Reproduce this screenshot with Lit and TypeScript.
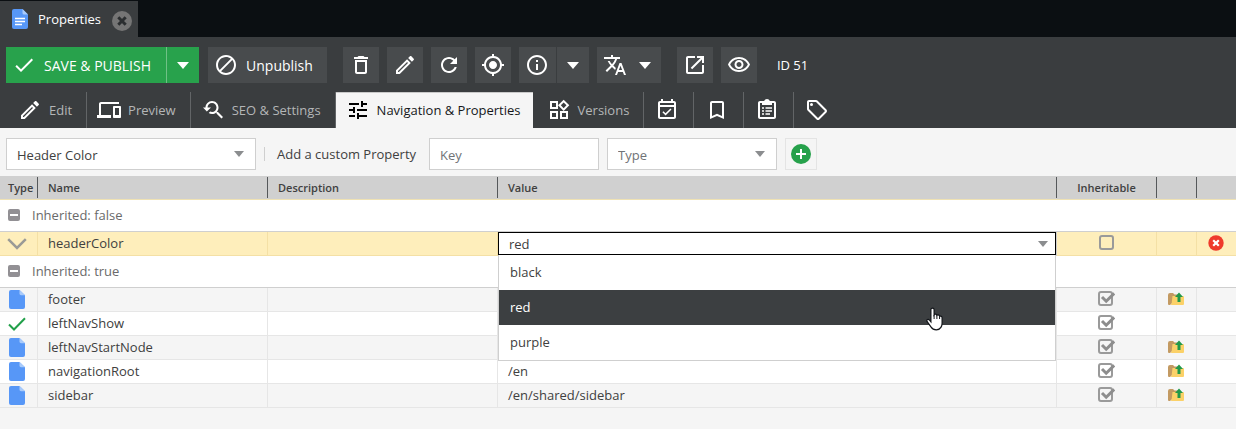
import { LitElement, html, css, svg, nothing } from "lit";
import { customElement, property, state } from "lit/decorators.js";
import { classMap } from "lit/directives/class-map.js";

const ICONS: Record<string, string> = {
  done: "M9 16.2L4.8 12l-1.4 1.4L9 19 21 7l-1.4-1.4L9 16.2z",
  block:
    "M12 2C6.48 2 2 6.48 2 12s4.48 10 10 10 10-4.48 10-10S17.52 2 12 2zM4 12c0-4.42 3.58-8 8-8 1.85 0 3.55.63 4.9 1.69L5.69 16.9C4.63 15.55 4 13.85 4 12zm8 8c-1.85 0-3.55-.63-4.9-1.69L18.31 7.1C19.37 8.45 20 10.15 20 12c0 4.42-3.58 8-8 8z",
  trash:
    "M16 9v10H8V9h8m-1.5-6h-5l-1 1H5v2h14V4h-3.5l-1-1zM18 7H6v12c0 1.1.9 2 2 2h8c1.1 0 2-.9 2-2V7z",
  edit: "M14.06 9.02l.92.92L5.92 19H5v-.92l9.06-9.06M17.66 3c-.25 0-.51.1-.7.29l-1.83 1.83 3.75 3.75 1.83-1.83c.39-.39.39-1.02 0-1.41l-2.34-2.34c-.2-.2-.45-.29-.71-.29zm-3.6 3.19L3 17.25V21h3.75L17.81 9.94l-3.75-3.75z",
  refresh:
    "M17.65 6.35C16.2 4.9 14.21 4 12 4c-4.42 0-7.99 3.58-8 8s3.57 8 8 8c3.73 0 6.84-2.55 7.73-6h-2.08c-.82 2.33-3.04 4-5.65 4-3.31 0-6-2.69-6-6s2.69-6 6-6c1.66 0 3.14.69 4.22 1.78L13 11h7V4l-2.35 2.35z",
  locate:
    "M12 8c-2.21 0-4 1.79-4 4s1.79 4 4 4 4-1.79 4-4-1.79-4-4-4zm8.94 3c-.46-4.17-3.77-7.48-7.94-7.94V1h-2v2.06C6.83 3.52 3.52 6.83 3.06 11H1v2h2.06c.46 4.17 3.77 7.48 7.94 7.94V23h2v-2.06c4.17-.46 7.48-3.77 7.94-7.94H23v-2h-2.06zM12 19c-3.87 0-7-3.13-7-7s3.13-7 7-7 7 3.13 7 7-3.13 7-7 7z",
  info: "M11 7h2v2h-2zm0 4h2v6h-2zm1-9C6.48 2 2 6.48 2 12s4.48 10 10 10 10-4.48 10-10S17.52 2 12 2zm0 18c-4.41 0-8-3.59-8-8s3.59-8 8-8 8 3.59 8 8-3.59 8-8 8z",
  translate:
    "M12.87 15.07l-2.54-2.51.03-.03c1.74-1.94 2.98-4.17 3.71-6.53H17V4h-7V2H8v2H1v1.99h11.17C11.5 7.92 10.44 9.75 9 11.35 8.07 10.32 7.3 9.19 6.69 8h-2c.73 1.63 1.73 3.17 2.98 4.56l-5.09 5.02L4 19l5-5 3.11 3.11.76-2.04zM18.5 10h-2L12 22h2l1.12-3h4.75L21 22h2l-4.5-12zm-2.62 7l1.62-4.33L19.12 17h-3.24z",
  open: "M19 19H5V5h7V3H5c-1.11 0-2 .9-2 2v14c0 1.1.89 2 2 2h14c1.1 0 2-.9 2-2v-7h-2v7zM14 3v2h3.59l-9.83 9.83 1.41 1.41L19 6.41V10h2V3h-7z",
  eye: "M12 6c3.79 0 7.17 2.13 8.82 5.5C19.17 14.87 15.79 17 12 17s-7.17-2.13-8.82-5.5C4.83 8.13 8.21 6 12 6m0-2C7 4 2.73 7.11 1 11.5 2.73 15.89 7 19 12 19s9.27-3.11 11-7.5C21.27 7.11 17 4 12 4zm0 5c1.38 0 2.5 1.12 2.5 2.5S13.38 14 12 14s-2.5-1.12-2.5-2.5S10.62 9 12 9m0-2c-2.48 0-4.5 2.02-4.5 4.5S9.52 16 12 16s4.5-2.02 4.5-4.5S14.48 7 12 7z",
  devices:
    "M4 6h18V4H4c-1.1 0-2 .9-2 2v11H0v3h14v-3H4V6zm19 2h-6c-.55 0-1 .45-1 1v10c0 .55.45 1 1 1h6c.55 0 1-.45 1-1V9c0-.55-.45-1-1-1zm-1 9h-4v-7h4v7z",
  seo: "M17.01 14h-.8l-.27-.27c.98-1.14 1.57-2.61 1.57-4.23 0-3.59-2.91-6.5-6.5-6.5s-6.5 3-6.5 6.5H2l3.84 4 4.16-4H6.51C6.51 7 8.53 5 11.01 5s4.5 2.01 4.5 4.5c0 2.48-2.02 4.5-4.5 4.5-.65 0-1.26-.14-1.82-.38L7.71 15.1c.97.57 2.09.9 3.3.9 1.61 0 3.08-.59 4.22-1.57l.27.27v.79l5.01 4.99L22 19l-4.99-5z",
  tune: "M3 17v2h6v-2H3zM3 5v2h10V5H3zm10 16v-2h8v-2h-8v-2h-2v6h2zM7 9v2H3v2h4v2h2V9H7zm14 4v-2H11v2h10zm-6-4h2V7h4V5h-4V3h-2v6z",
  widgets:
    "M16.66 4.52l2.83 2.83-2.83 2.83-2.83-2.83 2.83-2.83M9 5v4H5V5h4m10 10v4h-4v-4h4M9 15v4H5v-4h4m7.66-13.31L11 7.34 16.66 13l5.66-5.66-5.66-5.65zM11 3H3v8h8V3zm10 10h-8v8h8v-8zm-10 0H3v8h8v-8z",
  schedule:
    "M19 3h-1V1h-2v2H8V1H6v2H5c-1.11 0-1.99.9-1.99 2L3 19c0 1.1.89 2 2 2h14c1.1 0 2-.9 2-2V5c0-1.1-.9-2-2-2zm0 16H5V9h14v10zM5 7V5h14v2H5zm5.56 10.46l5.93-5.93-1.06-1.06-4.87 4.87-2.11-2.11-1.06 1.06z",
  bookmark:
    "M17 3H7c-1.1 0-1.99.9-1.99 2L5 21l7-3 7 3V5c0-1.1-.9-2-2-2zm0 15l-5-2.18L7 18V5h10v13z",
  clipboard:
    "M19 3h-4.18C14.4 1.84 13.3 1 12 1s-2.4.84-2.82 2H5c-1.1 0-2 .9-2 2v14c0 1.1.9 2 2 2h14c1.1 0 2-.9 2-2V5c0-1.1-.9-2-2-2zm0 16H5V5h2v2h10V5h2v14zM7 9.2h2v1.6H7zM10.500 9.2H17v1.6h-6.500zM7 12.200h2v1.6H7zM10.500 12.200H17v1.6h-6.500zM7 15.200h2v1.6H7zM10.500 15.200H15v1.6h-4.500z",
  tag: "M21.41 11.58l-9-9C12.05 2.22 11.55 2 11 2H4c-1.1 0-2 .9-2 2v7c0 .55.22 1.05.59 1.42l9 9c.36.36.86.58 1.41.58s1.05-.22 1.41-.59l7-7c.37-.36.59-.86.59-1.41s-.23-1.06-.59-1.42zM13 20.01L4 11V4h7v-.01l9 9-7 7.02zM6.5 5a1.5 1.5 0 1 0 0 3 1.5 1.5 0 0 0 0-3z",
};

const icon = (name: string) => html`
  <svg width="24" height="24" viewBox="0 0 24 24" fill="currentColor" aria-hidden="true">
    ${svg`<path d=${ICONS[name]}></path>`}
  </svg>
`;

const caret = html`
  <svg class="caret" width="12" height="7" viewBox="0 0 12 7" fill="currentColor" aria-hidden="true">
    <path d="M0 0h12L6 7z"></path>
  </svg>
`;

const smallCaret = html`
  <svg class="small-caret" width="10" height="6" viewBox="0 0 10 6" fill="currentColor" aria-hidden="true">
    <path d="M0 0h10L5 6z"></path>
  </svg>
`;

const doc = (lines: boolean) => html`
  <svg width="16" height=${lines ? 20 : 19} viewBox="0 0 16 20" preserveAspectRatio="none" aria-hidden="true">
    <path d="M2 0h8.500L16 5.500V18a2 2 0 0 1-2 2H2a2 2 0 0 1-2-2V2a2 2 0 0 1 2-2z" fill="#5797f7"></path>
    <path d="M10.500 0L16 5.500h-4a1.500 1.500 0 0 1-1.500-1.500z" fill="#a9cbfb"></path>
    ${lines
      ? svg`<path d="M3 9.500h10M3 12.500h10M3 15.500h7" stroke="#fff" stroke-width="1.300"></path>`
      : nothing}
  </svg>
`;

const check = html`
  <svg width="18" height="14" viewBox="0 0 18 14" fill="none" aria-hidden="true">
    <path d="M1 7.500l5 5L17 1.200" stroke="#22a04a" stroke-width="2"></path>
  </svg>
`;

const chevron = html`
  <svg width="20" height="12" viewBox="0 0 20 12" fill="none" aria-hidden="true">
    <path d="M1.200 1.200l8.800 8.800 8.800-8.800" stroke="#9a9a96" stroke-width="2.500"></path>
  </svg>
`;

const folder = html`
  <svg width="16" height="14" viewBox="0 0 16 14" aria-hidden="true">
    <path d="M0 3q0-2 2-2h3l1.500 1.500H10V6L2 13H1q-1 0-1-1z" fill="#c39a62"></path>
    <path d="M4.500 4H15q1 0 1 1v7q0 1-1 1H2.500q1-.5 1.200-2z" fill="#fbd168"></path>
    <path d="M11 .5L15 5h-2.500v5h-3V5H7z" fill="#22994a"></path>
  </svg>
`;

const plusCircle = html`
  <svg width="20" height="20" viewBox="0 0 20 20" aria-hidden="true">
    <circle cx="10" cy="10" r="10" fill="#26a14b"></circle>
    <path d="M10 5v10M5 10h10" stroke="#fff" stroke-width="2"></path>
  </svg>
`;

const removeCircle = html`
  <svg width="16" height="16" viewBox="0 0 16 16" aria-hidden="true">
    <circle cx="8" cy="8" r="7.700" fill="#ef3a2b"></circle>
    <path d="M5.200 5.200l5.600 5.600M10.800 5.200l-5.600 5.600" stroke="#fff" stroke-width="2.200"></path>
  </svg>
`;

const closeCircle = html`
  <svg width="20" height="20" viewBox="0 0 20 20" aria-hidden="true">
    <circle cx="10" cy="10" r="10" fill="#757575"></circle>
    <path d="M6.300 6.300l7.400 7.400M13.700 6.300l-7.400 7.400" stroke="#2b2e30" stroke-width="3"></path>
  </svg>
`;

const collapseMark = html`
  <svg width="12" height="12" viewBox="0 0 12 12" aria-hidden="true">
    <rect width="12" height="12" rx="2" fill="#929094"></rect>
    <path d="M2 6h8" stroke="#fff" stroke-width="2"></path>
  </svg>
`;

const pointer = html`
  <svg class="pointer" width="18" height="24" viewBox="0 0 18 24" aria-hidden="true">
    <path
      d="M6.500 1.200c1 0 1.600.7 1.600 1.600v5c.3-.5.8-.7 1.300-.7.800 0 1.400.5 1.500 1.200.3-.3.700-.4 1.100-.4.900 0 1.500.6 1.600 1.400.2-.1.500-.2.800-.2 1 0 1.700.7 1.700 1.700v5.400c0 1.800-.5 3-1.200 4.200-.8 1.400-1.900 2.400-4.600 2.400-2.800 0-4.100-.9-5.200-2.700L1.200 14.700c-.5-.9-.4-1.700.2-2.100.7-.5 1.500-.2 2.100.5l1.400 1.700v-12c0-.9.700-1.600 1.600-1.600z"
      fill="#fff"
      stroke="#111418"
      stroke-width="1.200"
    ></path>
    <path d="M8.100 8v4M10.900 8.500V12M13.600 9.500V12" stroke="#111418" fill="none"></path>
  </svg>
`;

interface PropertyRow {
  kind: "doc" | "bool" | "select";
  name: string;
  value: string;
  inheritable: boolean;
  open: boolean;
  removable: boolean;
}

interface Group {
  label: string;
  rows: PropertyRow[];
}

const GROUPS: Group[] = [
  {
    label: "Inherited: false",
    rows: [
      { kind: "select", name: "headerColor", value: "red", inheritable: false, open: false, removable: true },
    ],
  },
  {
    label: "Inherited: true",
    rows: [
      { kind: "doc", name: "footer", value: "", inheritable: true, open: true, removable: false },
      { kind: "bool", name: "leftNavShow", value: "", inheritable: true, open: false, removable: false },
      { kind: "doc", name: "leftNavStartNode", value: "", inheritable: true, open: true, removable: false },
      { kind: "doc", name: "navigationRoot", value: "/en", inheritable: true, open: true, removable: false },
      { kind: "doc", name: "sidebar", value: "/en/shared/sidebar", inheritable: true, open: true, removable: false },
    ],
  },
];

const base = css`
  * {
    box-sizing: border-box;
  }
  svg {
    display: block;
    flex: none;
  }
  button,
  input,
  select {
    font: inherit;
    color: inherit;
    margin: 0;
    padding: 0;
    border: 0;
    border-radius: 0;
    background: none;
    outline: none;
  }
  button {
    display: flex;
    align-items: center;
    cursor: pointer;
  }
  select {
    appearance: none;
  }
`;

@customElement("document-toolbar")
export class DocumentToolbar extends LitElement {
  static styles = [
    base,
    css`
      :host {
        display: flex;
        align-items: center;
        flex-wrap: wrap;
        gap: 9px;
        padding: 10px 6px 9px;
        color: #fff;
        font-size: 14px;
      }
      .btn {
        height: 36px;
        padding: 0 6px;
        background: #484b4d;
        font-weight: 500;
      }
      .text-btn {
        gap: 8px;
        padding: 0 14px 0 6px;
      }
      .split {
        display: flex;
        gap: 1px;
      }
      .split .btn:first-child {
        padding-right: 7px;
      }
      .primary .btn {
        background: #28a24c;
      }
      .primary {
        background: #6fc186;
      }
      .split .text-btn:first-child {
        padding-right: 15px;
      }
      .arrow {
        padding: 0 10px;
      }
      .wide {
        gap: 12px;
        padding: 0 10px 0 6px;
      }
      .group {
        display: flex;
        gap: 8px;
        padding: 0 7px;
      }
      .last {
        display: flex;
        gap: 8px;
      }
      .id {
        padding-left: 11px;
        font-size: 13px;
      }
    `,
  ];

  render() {
    return html`
      <div class="split primary">
        <button class="btn text-btn">${icon("done")}SAVE &amp; PUBLISH</button>
        <button class="btn arrow" aria-label="More save options">${caret}</button>
      </div>
      <button class="btn text-btn">${icon("block")}Unpublish</button>
      <div class="group">
        <button class="btn" aria-label="Delete">${icon("trash")}</button>
        <button class="btn" aria-label="Rename">${icon("edit")}</button>
        <button class="btn" aria-label="Reload">${icon("refresh")}</button>
        <button class="btn" aria-label="Show in tree">${icon("locate")}</button>
        <div class="split">
          <button class="btn" aria-label="Info">${icon("info")}</button>
          <button class="btn arrow" aria-label="More info">${caret}</button>
        </div>
        <button class="btn wide" aria-label="Translation">${icon("translate")}${caret}</button>
      </div>
      <div class="last">
        <button class="btn" aria-label="Open">${icon("open")}</button>
        <button class="btn" aria-label="Preview">${icon("eye")}</button>
      </div>
      <span class="id">ID 51</span>
    `;
  }
}

@customElement("document-tabs")
export class DocumentTabs extends LitElement {
  @state() private active = 3;

  private tabs = [
    { icon: "edit", label: "Edit" },
    { icon: "devices", label: "Preview" },
    { icon: "seo", label: "SEO & Settings" },
    { icon: "tune", label: "Navigation & Properties" },
    { icon: "widgets", label: "Versions" },
    { icon: "schedule", label: "", name: "Schedule" },
    { icon: "bookmark", label: "", name: "Bookmarks" },
    { icon: "clipboard", label: "", name: "Notes" },
    { icon: "tag", label: "", name: "Tags" },
  ];

  static styles = [
    base,
    css`
      :host {
        display: flex;
        color: #b4b6b7;
        font-size: 13px;
      }
      .tab {
        height: 36px;
        gap: 7px;
        padding: 0 14px 0 10px;
        border-right: 1px solid #626567;
      }
      .tab svg {
        color: #fff;
      }
      .tab:first-child {
        padding-left: 18px;
      }
      .tab.bare {
        padding: 0 14px 0 11px;
      }
      .tab.active {
        background: #f5f5f5;
        box-shadow: inset 0 1px #c9c9c9;
        border-right: 0;
        color: #16181a;
        padding: 0 12px 0 10px;
      }
      .tab.active svg {
        color: #000;
      }
      .tab.active + .tab {
        padding-left: 14px;
      }
      .tab:last-child {
        border-right: 0;
      }
    `,
  ];

  render() {
    return html`${this.tabs.map(
      (tab, i) => html`
        <button
          role="tab"
          aria-selected=${i === this.active}
          aria-label=${tab.label || tab.name}
          class=${classMap({ tab: true, active: i === this.active, bare: !tab.label })}
          @click=${() => (this.active = i)}
        >
          ${icon(tab.icon)}${tab.label ? html`<span>${tab.label}</span>` : nothing}
        </button>
      `,
    )}`;
  }
}

@customElement("property-form")
export class PropertyForm extends LitElement {
  static styles = [
    base,
    css`
      :host {
        display: flex;
        align-items: center;
        padding: 10px 6px 6px;
        color: #404040;
        font-size: 13px;
      }
      .field {
        display: grid;
        align-items: center;
        width: 170px;
        height: 32px;
        border: 1px solid #cfcfcf;
        background: #fff;
      }
      .field > * {
        grid-area: 1 / 1;
      }
      .predefined {
        width: 250px;
      }
      .small-caret {
        justify-self: end;
        margin-right: 11px;
        color: #8b8d8f;
        pointer-events: none;
      }
      select,
      input {
        width: 100%;
        height: 30px;
        padding: 2px 10px 0;
      }
      .muted,
      input::placeholder {
        color: #6f7376;
        opacity: 1;
      }
      .caption {
        margin: 0 13px 0 8px;
        padding-left: 12px;
        border-left: 1px solid #cfcfcf;
        line-height: 14px;
      }
      .type {
        margin: 0 8px;
      }
      .add {
        justify-content: center;
        width: 32px;
        height: 32px;
        border: 1px solid #e4e4e4;
      }
    `,
  ];

  render() {
    return html`
      <div class="field predefined">
        <select aria-label="Predefined property">
          <option>Header Color</option>
        </select>
        ${smallCaret}
      </div>
      <label class="caption" for="key">Add a custom Property</label>
      <div class="field"><input id="key" type="text" placeholder="Key" /></div>
      <div class="field type">
        <select class="muted" aria-label="Property type">
          <option>Type</option>
        </select>
        ${smallCaret}
      </div>
      <button class="add" aria-label="Add property">${plusCircle}</button>
    `;
  }
}

@customElement("value-picker")
export class ValuePicker extends LitElement {
  @property({ type: String }) value = "";
  @property({ attribute: false }) options: string[] = [];

  static styles = [
    base,
    css`
      :host {
        display: block;
        position: relative;
      }
      .field {
        display: grid;
        align-items: center;
        height: 23px;
        border: 1px solid #000;
        background: #fff;
      }
      .field > * {
        grid-area: 1 / 1;
      }
      select {
        width: 100%;
        height: 21px;
        padding: 1px 10px 0;
      }
      .small-caret {
        justify-self: end;
        margin-right: 7px;
        color: #8b8d8f;
        pointer-events: none;
      }
      .list {
        position: absolute;
        z-index: 2;
        top: 100%;
        left: 0;
        right: 0;
        margin: 0;
        padding: 0;
        list-style: none;
        background: #fff;
        border: 1px solid #cfcfcf;
        border-top: 0;
      }
      .option {
        position: relative;
        padding: 0 11px;
        line-height: 35px;
      }
      .option.selected {
        background: #3c3f41;
        color: #fff;
      }
      .pointer {
        position: absolute;
        top: 17px;
        right: 111px;
      }
    `,
  ];

  render() {
    return html`
      <div class="field">
        <select aria-label="Value">
          ${this.options.map((o) => html`<option ?selected=${o === this.value}>${o}</option>`)}
        </select>
        ${smallCaret}
      </div>
      <ul class="list" role="listbox" aria-label="Value">
        ${this.options.map(
          (o) => html`
            <li
              role="option"
              aria-selected=${o === this.value}
              class=${classMap({ option: true, selected: o === this.value })}
            >
              ${o}${o === this.value ? pointer : nothing}
            </li>
          `,
        )}
      </ul>
    `;
  }
}

@customElement("property-grid")
export class PropertyGrid extends LitElement {
  static styles = [
    base,
    css`
      :host {
        display: block;
        color: #404040;
        font-size: 13px;
      }
      .grid {
        width: 100%;
        table-layout: fixed;
        border-collapse: separate;
        border-spacing: 0;
      }
      .c-type {
        width: 38px;
      }
      .c-text {
        width: 230px;
      }
      .c-flag {
        width: 100px;
      }
      .c-action {
        width: 40px;
      }
      .c-last {
        width: 39px;
      }
      .head th {
        height: 24px;
        padding: 1px 0;
        background: #d0d0d0;
        border-bottom: 1px solid #efe2b4;
        font-size: 11px;
        font-weight: 600;
        text-align: left;
      }
      .head div {
        height: 21px;
        padding-left: 10px;
        line-height: 22px;
        border-right: 1px solid #55585a;
      }
      .head th:first-child div {
        padding-left: 8px;
      }
      .head th:last-child div {
        border-right: 0;
      }
      .head .center {
        padding: 0;
        text-align: center;
      }
      .group th {
        height: 32px;
        padding: 0 8px 2px;
        background: #fff;
        border-bottom: 1px solid #cfcfcf;
        color: #6a6a6a;
        font-weight: 400;
        text-align: left;
      }
      .group button {
        gap: 12px;
      }
      .row td {
        height: 24px;
        padding: 0 10px 2px;
        background: #fff;
        border-right: 1px solid #e6e6e6;
        border-bottom: 1px solid #e6e6e6;
        line-height: 18px;
      }
      .row.alt td {
        background: #f5f5f5;
      }
      .row.edited td {
        background: #feeebb;
        border-color: #f4e0a5;
      }
      .row td:last-child {
        border-right: 0;
      }
      .row td.mark {
        padding: 0 3px 0 0;
      }
      .row td.flag-cell {
        padding: 0 0 2px;
      }
      .row td.action {
        padding: 0 1px 1px 0;
      }
      .row td.picker {
        padding: 0;
        border-color: #cfcfcf;
        vertical-align: top;
      }
      .center-box {
        display: flex;
        align-items: center;
        justify-content: center;
      }
      .flag {
        display: grid;
        justify-content: center;
        align-items: center;
      }
      .flag > * {
        grid-area: 1 / 1;
      }
      .flag input {
        appearance: none;
        width: 15px;
        height: 15px;
        border: 2px solid #9a9a9a;
        border-radius: 3px;
      }
      .tick {
        pointer-events: none;
      }
      .link {
        display: block;
      }
    `,
  ];

  private renderRow(row: PropertyRow, alt: boolean) {
    const mark = row.kind === "doc" ? doc(false) : row.kind === "bool" ? check : chevron;
    return html`
      <tr class=${classMap({ row: true, alt, edited: row.removable })}>
        <td class="mark"><div class="center-box">${mark}</div></td>
        <td>${row.name}</td>
        <td></td>
        ${row.kind === "select"
          ? html`<td class="picker">
              <value-picker .value=${row.value} .options=${["black", "red", "purple"]}></value-picker>
            </td>`
          : html`<td>${row.value}</td>`}
        <td class="flag-cell">
          <div class="flag">
            <input type="checkbox" aria-label="Inheritable" .checked=${row.inheritable} />
            ${row.inheritable
              ? html`<svg class="tick" width="17" height="15" viewBox="0 0 17 15" fill="none" aria-hidden="true">
                  <path d="M4 6l4.200 4.200L16.200 2.400" stroke="#8d8d8d" stroke-width="3"></path>
                </svg>`
              : nothing}
          </div>
        </td>
        <td class="action">
          <div class="center-box">
            ${row.open ? html`<a class="link" href="#" aria-label="Open ${row.name}">${folder}</a>` : nothing}
          </div>
        </td>
        <td class="action">
          <div class="center-box">
            ${row.removable ? html`<button aria-label="Remove">${removeCircle}</button>` : nothing}
          </div>
        </td>
      </tr>
    `;
  }

  render() {
    return html`
      <table class="grid">
        <colgroup>
          <col class="c-type" />
          <col class="c-text" />
          <col class="c-text" />
          <col />
          <col class="c-flag" />
          <col class="c-action" />
          <col class="c-last" />
        </colgroup>
        <thead>
          <tr class="head">
            <th><div>Type</div></th>
            <th><div>Name</div></th>
            <th><div>Description</div></th>
            <th><div>Value</div></th>
            <th><div class="center">Inheritable</div></th>
            <th><div></div></th>
            <th><div></div></th>
          </tr>
        </thead>
        ${GROUPS.map(
          (g) => html`
            <tbody>
              <tr class="group">
                <th colspan="7"><button>${collapseMark}${g.label}</button></th>
              </tr>
              ${g.rows.map((r, i) => this.renderRow(r, i % 2 === 0))}
            </tbody>
          `,
        )}
      </table>
    `;
  }
}

@customElement("app-root")
export class AppRoot extends LitElement {
  static styles = [
    base,
    css`
      :host {
        display: block;
        min-height: 100vh;
        background: #f5f5f5;
        font-family: "Open Sans", "Noto Sans", sans-serif;
        font-size: 13px;
      }
      .strip {
        display: flex;
        padding-top: 1px;
        background: #0b0f12;
      }
      .doc-tab {
        display: flex;
        align-items: center;
        gap: 10px;
        height: 36px;
        padding: 0 6px 0 12px;
        background: #3a3d3f;
        color: #fff;
      }
      .close {
        padding: 3px 0 0 1px;
      }
      .chrome {
        background: #3a3d3f;
      }
    `,
  ];

  render() {
    return html`
      <div class="strip">
        <div class="doc-tab">
          ${doc(true)}<span>Properties</span>
          <button class="close" aria-label="Close">${closeCircle}</button>
        </div>
      </div>
      <header class="chrome">
        <document-toolbar></document-toolbar>
        <document-tabs role="tablist"></document-tabs>
      </header>
      <property-form></property-form>
      <property-grid></property-grid>
    `;
  }
}
